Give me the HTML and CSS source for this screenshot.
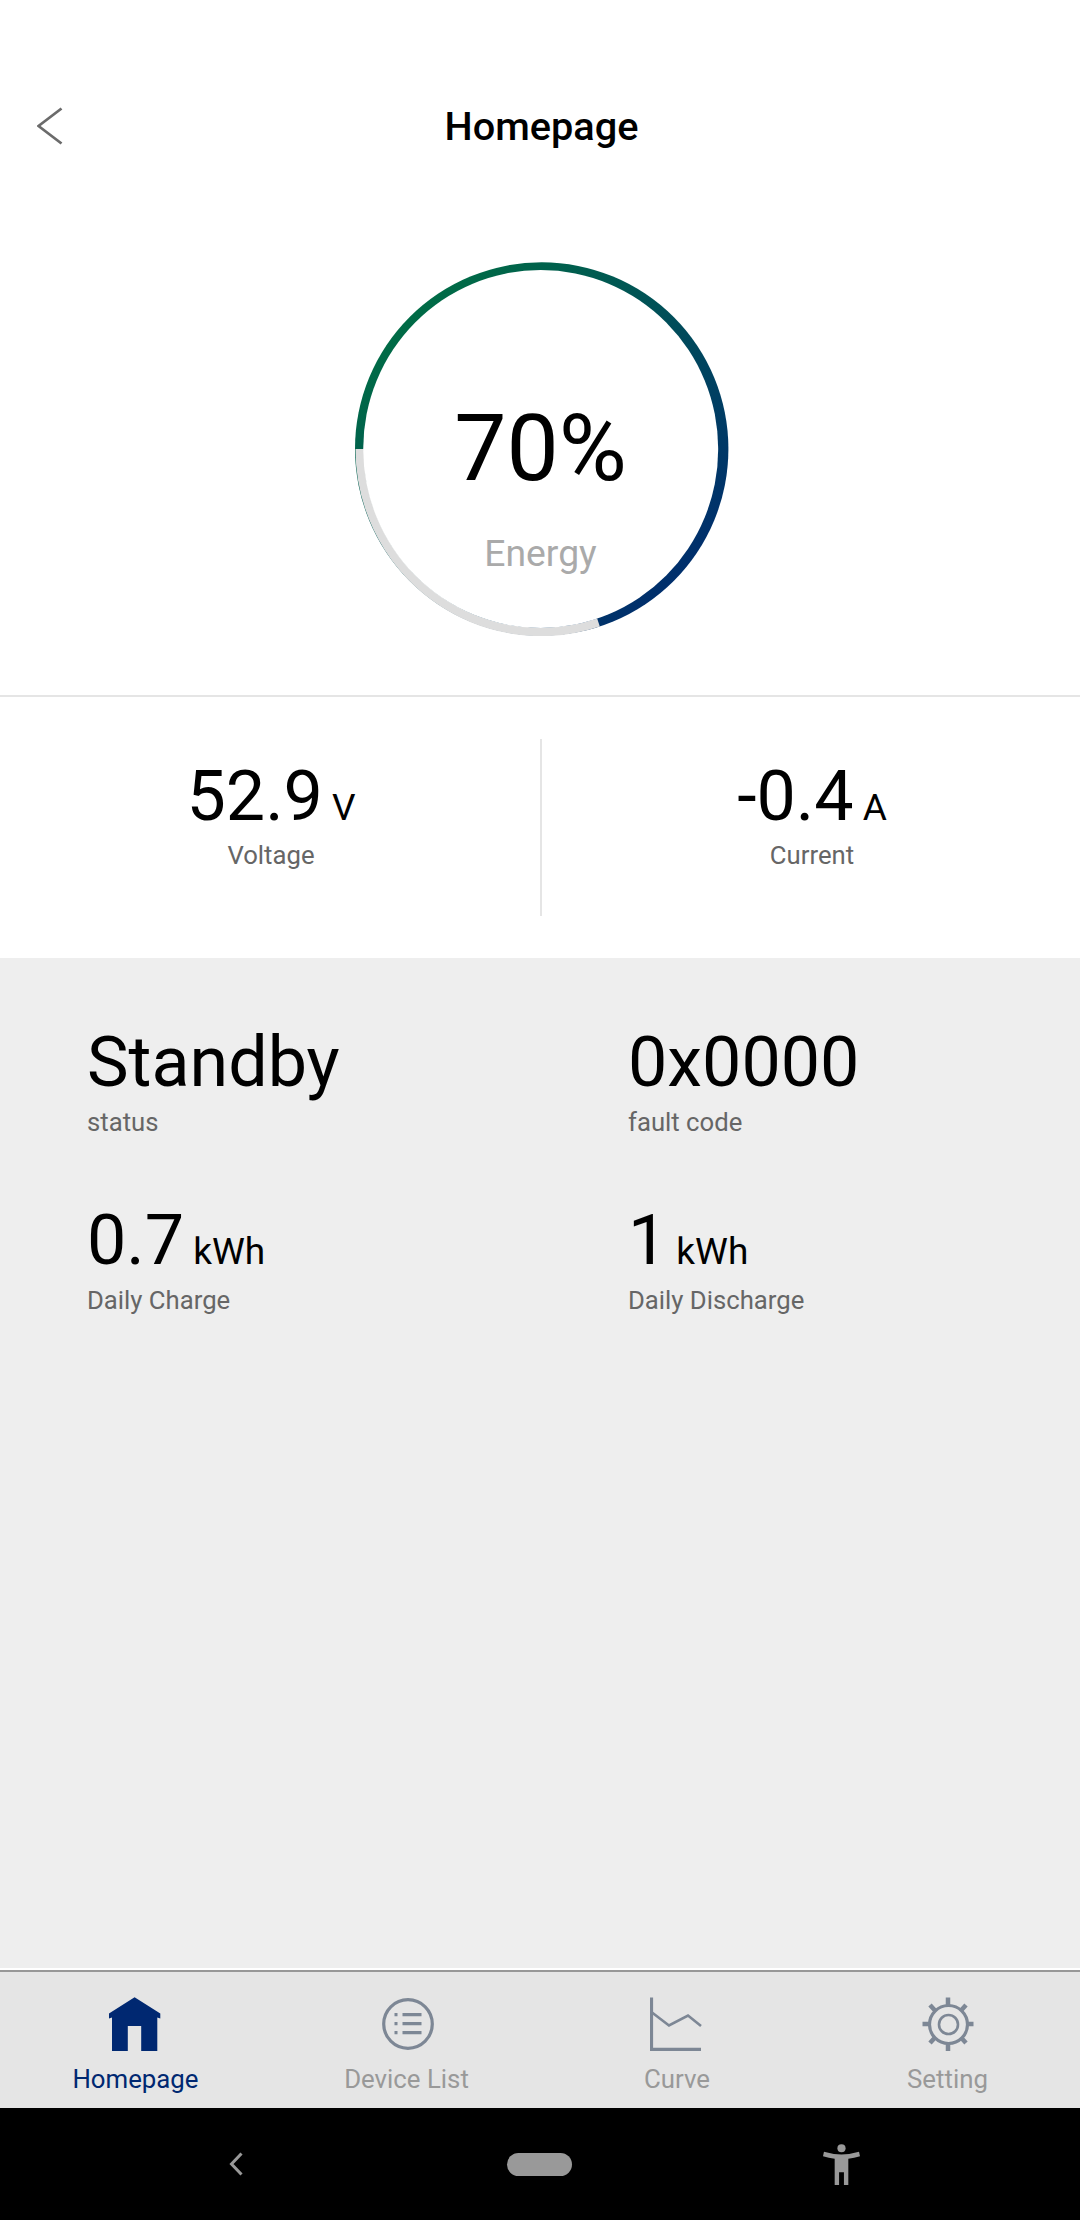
FILE: index.html
```html
<!DOCTYPE html>
<html lang="en">
<head>
<meta charset="utf-8">
<title>Homepage</title>
<link rel="stylesheet" href="styles.css">
</head>
<body>
<header class="header">
  <svg class="back" viewBox="0 0 26 38"><path d="M24.500 1.500L1.500 19L24.500 36.500"/></svg>
  <h1 class="title">Homepage</h1>
</header>
<main class="main">
  <section class="gauge">
    <svg class="ring" viewBox="0 0 374 374">
      <defs>
        <linearGradient id="energy" x1="0" y1="0" x2="1" y2="1">
          <stop offset="0.150" stop-color="#006b46"/>
          <stop offset="0.850" stop-color="#002f6c"/>
        </linearGradient>
      </defs>
      <circle cx="186.700" cy="187" r="186.700" fill="url(#energy)"/>
      <path class="track" d="M4.700 187A181.500 182.700 0 0 0 243.500 360.600"/>
      <ellipse cx="185.700" cy="187" rx="177.500" ry="179" fill="#fff"/>
    </svg>
    <div class="reading">
      <div class="percent">70%</div>
      <div class="caption">Energy</div>
    </div>
  </section>
  <section class="live">
    <div class="metric">
      <div class="value">52.9<span class="unit">V</span></div>
      <div class="label">Voltage</div>
    </div>
    <div class="metric">
      <div class="value">-0.4<span class="unit">A</span></div>
      <div class="label">Current</div>
    </div>
  </section>
  <section class="stats">
    <div class="stat">
      <div class="value">Standby</div>
      <div class="label">status</div>
    </div>
    <div class="stat">
      <div class="value">0x0000</div>
      <div class="label">fault code</div>
    </div>
    <div class="stat">
      <div class="value">0.7<span class="unit">kWh</span></div>
      <div class="label">Daily Charge</div>
    </div>
    <div class="stat">
      <div class="value">1<span class="unit">kWh</span></div>
      <div class="label">Daily Discharge</div>
    </div>
  </section>
</main>
<nav class="tabs">
  <a class="tab active">
    <svg class="icon" viewBox="0 0 54 54"><path fill="currentColor" d="M25.600 0.300L51.300 16.500V21.500L48.300 20.500V54H32.200V29H18.800V54H3V20.500L0 21.500V16.500Z"/></svg>
    <span>Homepage</span>
  </a>
  <a class="tab">
    <svg class="icon line" viewBox="0 0 54 54"><circle cx="28" cy="27" r="24.300"/><path d="M14.500 17.700h3M14.500 26.700h3M14.500 35.700h3M22.500 17.700h19M22.500 26.700h19M22.500 35.700h19"/></svg>
    <span>Device List</span>
  </a>
  <a class="tab">
    <svg class="icon line" viewBox="0 0 54 54"><path d="M1.500 0.500V52.300H51"/><path class="thin" d="M2 15.500L19 28.500L38 18.500L51 29"/></svg>
    <span>Curve</span>
  </a>
  <a class="tab">
    <svg class="icon line" viewBox="0 0 54 54"><circle cx="27.500" cy="27.500" r="19"/><circle class="thin" cx="27.500" cy="27.500" r="9.500"/><path class="teeth" d="M27 0.500V8M27 46V54M1.500 27H9M45 27H52.500M9 8L14 13.500M45 8L40 13.500M9 46L14 40.500M45 46L40 40.500"/></svg>
    <span>Setting</span>
  </a>
</nav>
<footer class="system">
  <svg class="sys-back" viewBox="0 0 14 24"><path d="M12.500 1.500L2.500 12L12.500 22.500"/></svg>
  <div class="pill"></div>
  <svg class="person" viewBox="0 0 38 42"><circle cx="19" cy="4.300" r="4.200"/><path d="M1 8Q19 13.500 37 8L38 12.500Q32 14.500 26 15V42H21.500V29H16.500V42H12V15Q6 14.500 0 12.500Z"/></svg>
</footer>
</body>
</html>
```
FILE: styles.css
```css
* { box-sizing: border-box; }
body {
  margin: 0;
  width: 1080px;
  height: 2220px;
  display: flex;
  flex-direction: column;
  overflow: hidden;
  background: #fff;
  color: #000;
  font-family: Roboto, sans-serif;
}
.header {
  height: 172px;
  padding: 80px 36px 0 37px;
  display: grid;
  grid-template-columns: 100px 1fr 98px;
  align-items: center;
}
.back { width: 26px; height: 38px; fill: none; stroke: #6b6b6b; stroke-width: 2.800; }
.title { margin: 0; padding-top: 1px; text-align: center; font-size: 39.700px; line-height: 48px; font-weight: 500; }
.main { flex: 1; display: flex; flex-direction: column; }
.gauge {
  height: 525px;
  padding: 90px 0 0 355px;
  display: grid;
  grid-template-columns: 374px;
  grid-template-rows: 374px;
  border-bottom: 2px solid #e5e5e5;
}
.ring, .reading { grid-area: 1 / 1; }
.ring { width: 374px; height: 374px; }
.track { fill: none; stroke: #ddd; stroke-width: 8.400; }
.reading { z-index: 1; padding: 132px 3px 0 0; text-align: center; }
.percent { font-size: 93px; line-height: 110px; }
.caption { margin-top: 27px; font-size: 37.300px; line-height: 44px; color: #aaa; }
.live {
  height: 261px;
  padding: 42px 0;
  display: grid;
  grid-template-columns: 1fr 1fr;
}
.metric { padding: 15px 0 0 2px; text-align: center; }
.metric + .metric { border-left: 2px solid #e5e5e5; }
.value { font-size: 70px; line-height: 84px; white-space: nowrap; }
.unit { font-size: 37px; line-height: 40px; margin-left: 9px; }
.label { margin-top: 1px; font-size: 25.700px; line-height: 32px; color: #666; }
.stats {
  flex: 1;
  background: #eee;
  padding: 62px 0 0 87px;
  display: grid;
  grid-template-columns: 541px 1fr;
  grid-auto-rows: 178px;
}
.stats .label { margin-top: 2px; }
.tabs {
  height: 138px;
  margin-top: 2px;
  padding-top: 25px;
  display: grid;
  grid-template-columns: 271px 271px 270px 271px;
  background: #e5e5e5;
  border-top: 2px solid #979797;
}
.tab { display: flex; flex-direction: column; align-items: center; gap: 12px; font-size: 25.800px; line-height: 32px; color: #999; }
.tab.active { color: #002871; }
.icon { width: 54px; height: 54px; }
.line { fill: none; stroke: #7d8795; stroke-width: 3.200; }
.line .thin { stroke-width: 2.600; }
.line .teeth { stroke-width: 4.500; }
.system {
  height: 112px;
  padding-left: 229px;
  display: flex;
  align-items: center;
  background: #000;
}
.sys-back { width: 14px; height: 24px; fill: none; stroke: #999; stroke-width: 3; }
.pill { width: 65px; height: 23px; margin: 0 251px 0 264px; border-radius: 12px; background: #999; }
.person { width: 37px; height: 41px; fill: #999; }
```
